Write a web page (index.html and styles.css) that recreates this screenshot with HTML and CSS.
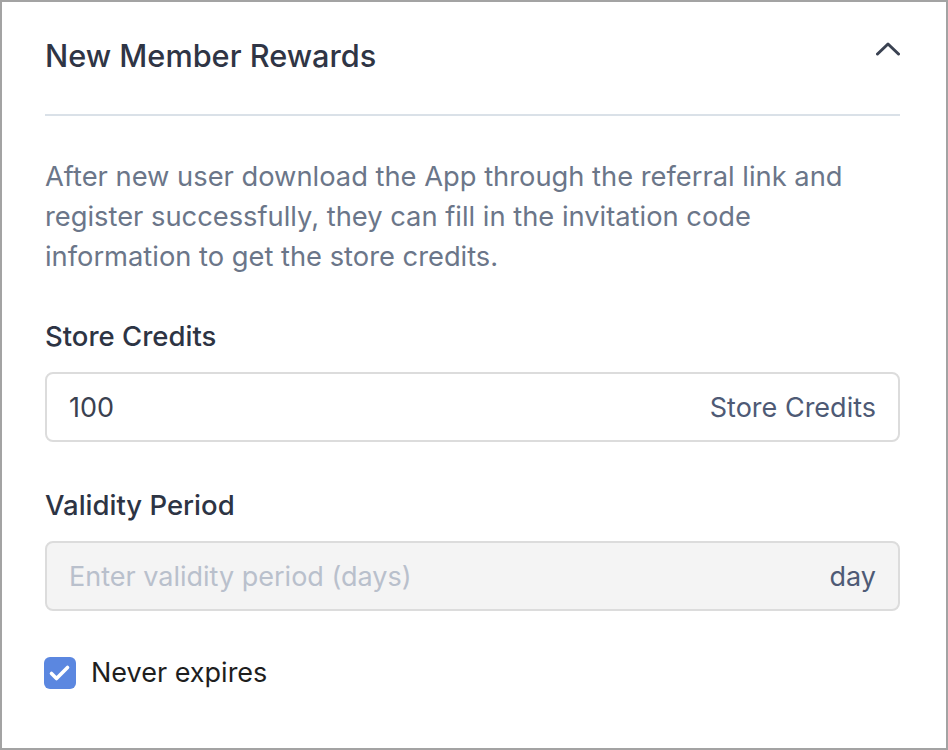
FILE: index.html
```html
<!DOCTYPE html>
<html lang="en">
<head>
<meta charset="utf-8">
<title>New Member Rewards</title>
<link rel="stylesheet" href="styles.css">
</head>
<body>
<div class="frame">
  <div class="panel">
    <div class="header">
      <h2 class="title">New Member Rewards</h2>
      <svg class="chevron" width="24" height="14" viewBox="0 0 24 14" aria-hidden="true">
        <path d="M1.5 12 L12 2 L22.5 12" fill="none" stroke="#3a4252" stroke-width="3" stroke-linecap="round" stroke-linejoin="round"/>
      </svg>
    </div>
    <p class="desc">After new user download the App through the referral link and register successfully, they can fill in the invitation code information to get the store credits.</p>
    <div class="field">
      <label class="label">Store Credits</label>
      <div class="input">
        <span class="value">100</span>
        <span class="suffix">Store Credits</span>
      </div>
    </div>
    <div class="field">
      <label class="label">Validity Period</label>
      <div class="input disabled">
        <span class="placeholder">Enter validity period (days)</span>
        <span class="suffix">day</span>
      </div>
    </div>
    <div class="check-row">
      <span class="checkbox">
        <svg width="32" height="32" viewBox="0 0 32 32" aria-hidden="true">
          <path d="M7.5 16.5 L12.5 21.5 L23.5 10.5" fill="none" stroke="#fff" stroke-width="3.6" stroke-linecap="round" stroke-linejoin="round"/>
        </svg>
      </span>
      <span class="check-label">Never expires</span>
    </div>
  </div>
</div>
</body>
</html>
```
FILE: styles.css
```css
html, body {
  margin: 0;
  padding: 0;
  background: #ffffff;
}
body {
  font-family: "Inter", "Liberation Sans", sans-serif;
}
.frame {
  width: 948px;
  height: 750px;
  box-sizing: border-box;
  border: 2px solid #a3a3a3;
  background: #ffffff;
}
.panel {
  padding: 0 46px 0 43px;
}
.header {
  display: flex;
  align-items: center;
  justify-content: space-between;
  height: 114px;
  box-sizing: border-box;
  padding-bottom: 6px;
  border-bottom: 2px solid #dae1e8;
}
.title {
  margin: 0;
  font-size: 30.7px;
  font-weight: 500;
  color: #2f3545;
  letter-spacing: 0;
}
.chevron {
  margin-bottom: 12px;
}
.desc {
  margin: 41px 0 0;
  font-size: 27.3px;
  line-height: 40px;
  color: #6b7689;
}
.field {
  margin-top: 39px;
}
.field + .field {
  margin-top: 43px;
}
.label {
  display: block;
  font-size: 27.5px;
  font-weight: 500;
  color: #2d3444;
  line-height: 40px;
}
.input {
  margin-top: 16px;
  height: 70px;
  box-sizing: border-box;
  border: 2px solid #dcdcdc;
  border-radius: 8px;
  display: flex;
  align-items: center;
  justify-content: space-between;
  padding: 0 22px 0 22px;
  font-size: 27px;
}
.input.disabled {
  background: #f4f4f4;
}
.value {
  color: #3a4150;
}
.suffix {
  color: #4e5a75;
}
.placeholder {
  color: #b9c0cc;
}
.check-row {
  margin-top: 45px;
  display: flex;
  align-items: center;
  gap: 15px;
}
.checkbox {
  width: 32px;
  height: 32px;
  border-radius: 6px;
  background: #5b87e0;
  display: flex;
  align-items: center;
  justify-content: center;
  margin-left: -1px;
}
.check-label {
  font-size: 27px;
  color: #1e1e1e;
}
```
